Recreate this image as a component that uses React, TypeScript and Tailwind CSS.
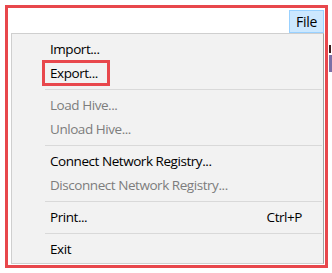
const items: (null | { label: string; disabled?: boolean; shortcut?: string; boxed?: boolean })[] = [
  { label: "Import..." },
  { label: "Export...", boxed: true },
  null,
  { label: "Load Hive...", disabled: true },
  { label: "Unload Hive...", disabled: true },
  null,
  { label: "Connect Network Registry..." },
  { label: "Disconnect Network Registry...", disabled: true },
  null,
  { label: "Print...", shortcut: "Ctrl+P" },
  null,
  { label: "Exit" },
]

export default function App() {
  return (
    <div
      className="relative h-[273px] w-[332px] overflow-hidden bg-white"
      style={{ fontFamily: '"Open Sans", "Noto Sans", sans-serif' }}
    >
      {/* edge of the window behind, right of the frame */}
      <div className="absolute left-[329px] top-[45px] h-[8px] w-[2px] bg-[#3a1d1d]" />
      <div className="absolute left-[329px] top-[55px] h-[17px] w-[3px] bg-[#7b6fa6]" />

      <div className="absolute left-[5px] top-[5px] flex h-[263px] w-[323px] flex-col border-[3px] border-[#e8474c] bg-white">
        {/* menu bar */}
        <div className="flex h-[25px] justify-end pr-px pt-[2px]">
          <div className="flex h-[23px] w-[35px] items-center justify-center border border-[#99d1ff] bg-[#cce8ff] text-[14px] tracking-[-0.3px] text-black">
            File
          </div>
        </div>

        {/* dropdown */}
        <div className="ml-[3px] mr-px flex h-[231px] flex-col border border-[#cfcfcf] border-r-[#a0a0a0] bg-[#f2f2f2] pt-[3px]">
          {items.map((item, i) =>
            item === null ? (
              <div key={i} className="flex h-[8px] items-center pl-[33px] pr-px">
                <div className="h-px w-full bg-[#d9d9d9]" />
              </div>
            ) : (
              <div
                key={i}
                className={`relative flex h-[24px] shrink-0 items-center justify-between pl-[38px] pr-[21px] text-[13.5px] tracking-[-0.45px] ${
                  item.disabled ? "text-[#7d7d7d]" : "text-black"
                }`}
              >
                <span>{item.label}</span>
                {item.shortcut && <span>{item.shortcut}</span>}
                {item.boxed && (
                  <div className="absolute left-[30px] top-[-1px] h-[26px] w-[68px] border-[3px] border-[#e8474c]" />
                )}
              </div>
            )
          )}
        </div>
      </div>
    </div>
  )
}
